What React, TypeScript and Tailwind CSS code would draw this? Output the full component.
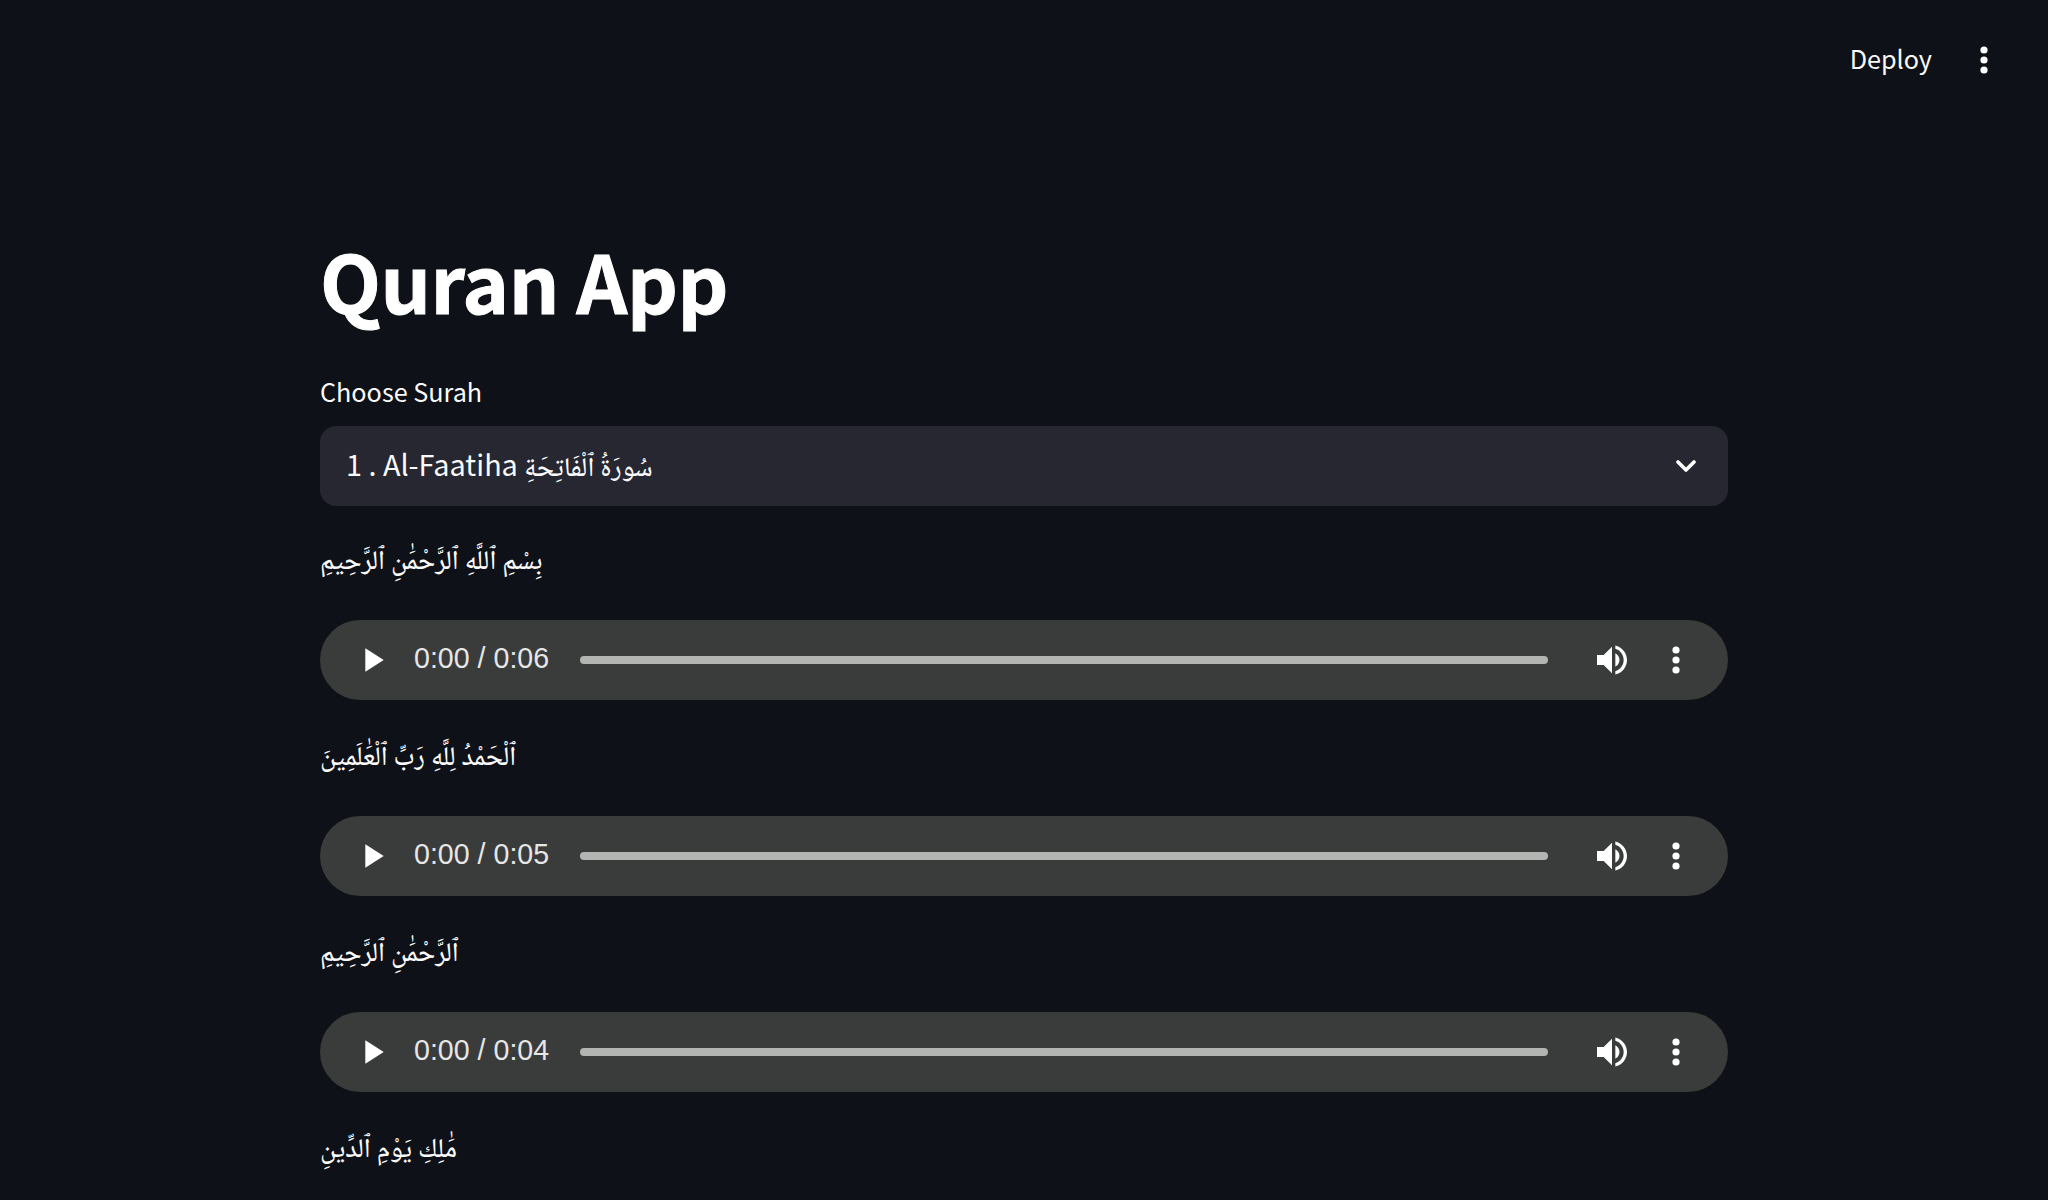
const latin = "font-['Noto_Sans_CJK_JP',sans-serif]";
const arabic = "font-['Noto_Naskh_Arabic',serif] text-[27px] font-medium";

const verses = [
  { text: 'بِسْمِ ٱللَّهِ ٱلرَّحْمَٰنِ ٱلرَّحِيمِ', time: '0:06' },
  { text: 'ٱلْحَمْدُ لِلَّهِ رَبِّ ٱلْعَٰلَمِينَ', time: '0:05' },
  { text: 'ٱلرَّحْمَٰنِ ٱلرَّحِيمِ', time: '0:04' },
];

function Dots({ className }: { className: string }) {
  return (
    <svg viewBox="0 0 40 40" className={className} fill="#ffffff">
      <circle cx="20" cy="10" r="3.6" />
      <circle cx="20" cy="20" r="3.6" />
      <circle cx="20" cy="30" r="3.6" />
    </svg>
  );
}

function AudioBar({ time }: { time: string }) {
  return (
    <div className="flex h-[80px] items-center rounded-[40px] bg-[#3a3c3b] px-[32px]">
      <svg viewBox="0 0 24 24" className="h-[40px] w-[40px] shrink-0" fill="#ffffff">
        <path d="M8 5v14l11-7z" />
      </svg>
      <span className="ml-[22px] w-[144px] shrink-0 whitespace-nowrap pb-[3px] font-['Liberation_Sans',sans-serif] text-[28.6px] text-[#e6e6e6]">
        0:00 / {time}
      </span>
      <div className="ml-[22px] h-[8px] flex-1 rounded-full bg-[#b3b5b3]" />
      <svg viewBox="0 0 24 24" className="ml-[44px] h-[40px] w-[40px] shrink-0" fill="#ffffff">
        <path d="M3 9v6h4l5 5V4L7 9H3zm13.5 3c0-1.77-1.02-3.29-2.5-4.03v8.05c1.48-.73 2.5-2.25 2.5-4.02zM14 3.23v2.06c2.89.86 5 3.54 5 6.71s-2.11 5.85-5 6.71v2.06c4.01-.91 7-4.49 7-8.77s-2.99-7.86-7-8.77z" />
      </svg>
      <Dots className="ml-[24px] h-[40px] w-[40px] shrink-0" />
    </div>
  );
}

export default function App() {
  return (
    <div className={`h-[1200px] overflow-hidden bg-[#0e1117] text-[#fafafa] ${latin}`}>
      <header className="flex h-[120px] items-start justify-end pr-[44px] pt-[40px]">
        <span className="text-[25.2px] leading-[36px]">Deploy</span>
        <Dots className="ml-[32px] h-[40px] w-[40px]" />
      </header>
      <main className="mx-auto w-[1408px]">
        <h1 className="mt-[110px] text-[79.2px] font-bold leading-[100px] tracking-[-0.4px] text-white [-webkit-text-stroke:1px_#fff]">Quran App</h1>
        <label className="mt-[41px] block text-[25.2px] leading-[40px]">Choose Surah</label>
        <div className="mb-[-2px] mt-[15px] flex h-[80px] items-center justify-between rounded-[16px] bg-[#262730] pl-[26px] pr-[32px]">
          <span className="text-[28.8px]">1 . Al-Faatiha <span className={arabic}>سُورَةُ ٱلْفَاتِحَةِ</span></span>
          <svg viewBox="0 0 20 12" className="h-[12px] w-[20px]" fill="none" stroke="#ffffff" strokeWidth="3.6" strokeLinecap="round" strokeLinejoin="round">
            <path d="M2 2l8 8 8-8" />
          </svg>
        </div>
        {verses.map((v) => (
          <section key={v.time}>
            <p className={`mt-[33px] h-[52px] leading-[52px] ${arabic}`}>{v.text}</p>
            <div className="mt-[31px]">
              <AudioBar time={v.time} />
            </div>
          </section>
        ))}
        <p className={`mt-[33px] h-[52px] leading-[52px] ${arabic}`}>مَٰلِكِ يَوْمِ ٱلدِّينِ</p>
      </main>
    </div>
  );
}
